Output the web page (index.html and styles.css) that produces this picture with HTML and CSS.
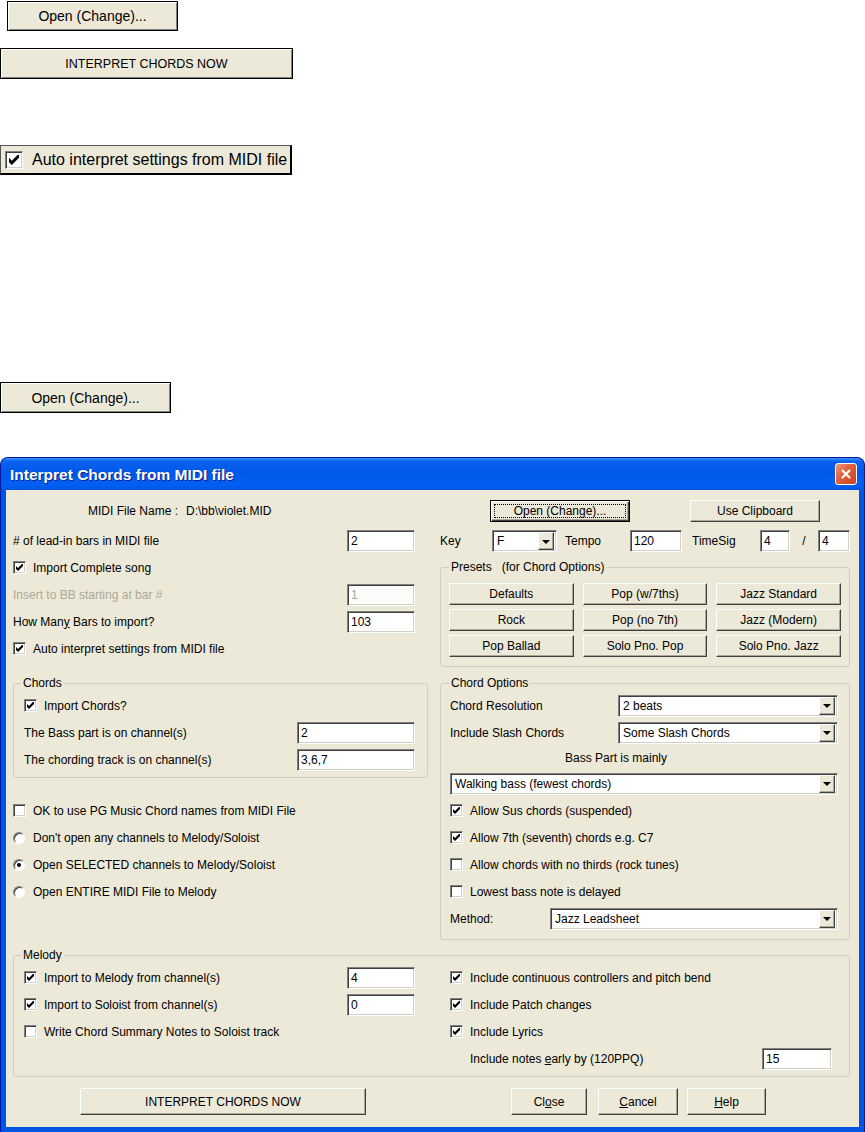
FILE: index.html
```html
<!DOCTYPE html>
<html lang="en">
<head>
    <meta charset="UTF-8">
    <title>Interpret Chords from MIDI file</title>
    <link rel="stylesheet" href="styles.css">
</head>
<body>
    <div class="samples">
        <button class="sample-btn open-first">Open (Change)...</button>
        <button class="sample-btn interpret">INTERPRET CHORDS NOW</button>
        <div class="sample-check">
            <span class="chk big"><svg width="10" height="10" viewBox="0 0 7 7"><path d="M0 2 L2 4 L7 -1 L7 2 L2 7 L0 5 Z"/></svg></span>
            Auto interpret settings from MIDI file
        </div>
        <button class="sample-btn open-second">Open (Change)...</button>
    </div>

    <div class="dialog">
        <div class="titlebar">
            <span class="title">Interpret Chords from MIDI file</span>
            <span class="close-x"><svg width="12" height="12" viewBox="0 0 12 12"><path d="M2 2 L10 10 M10 2 L2 10"/></svg></span>
        </div>

        <div class="client">
            <div class="split head">
                <div class="half-left file-name"><span>MIDI File Name :</span><span class="path">D:\bb\violet.MID</span></div>
                <div class="half-right">
                    <button class="btn default open-btn"><span class="focus">Open (Change)...</span></button>
                    <button class="btn clip-btn">Use Clipboard</button>
                </div>
            </div>

            <div class="split leadin">
                <div class="half-left row">
                    <span class="lbl"># of lead-in bars in MIDI file</span>
                    <div class="edit w68 gap-r">2</div>
                </div>
                <div class="half-right row">
                    <span class="key-lbl">Key</span>
                    <div class="combo w65"><span class="val">F</span><span class="arrow"></span></div>
                    <span class="tempo-lbl">Tempo</span>
                    <div class="edit w52">120</div>
                    <span class="ts-lbl">TimeSig</span>
                    <div class="edit w30">4</div>
                    <span class="slash">/</span>
                    <div class="edit w32">4</div>
                </div>
            </div>

            <div class="split cols">
                <div class="half-left">
                    <div class="line"><span class="chk on"><svg width="7" height="7" viewBox="0 0 7 7"><path d="M0 2 L2 4 L7 -1 L7 2 L2 7 L0 5 Z"/></svg></span>Import Complete song</div>
                    <div class="line disabled"><span class="lbl">Insert to BB starting at bar #</span><div class="edit w68 gap-r off">1</div></div>
                    <div class="line"><span class="lbl">How Man<u>y</u> Bars to import?</span><div class="edit w68 gap-r">103</div></div>
                    <div class="line"><span class="chk on"><svg width="7" height="7" viewBox="0 0 7 7"><path d="M0 2 L2 4 L7 -1 L7 2 L2 7 L0 5 Z"/></svg></span>Auto interpret settings from MIDI file</div>

                    <fieldset class="group chords">
                        <legend>Chords</legend>
                        <div class="line"><span class="chk on"><svg width="7" height="7" viewBox="0 0 7 7"><path d="M0 2 L2 4 L7 -1 L7 2 L2 7 L0 5 Z"/></svg></span>Import Chords?</div>
                        <div class="line"><span class="lbl">The Bass part is on channel(s)</span><div class="edit w118">2</div></div>
                        <div class="line"><span class="lbl">The chording track is on channel(s)</span><div class="edit w118">3,6,7</div></div>
                    </fieldset>

                    <div class="options">
                        <div class="line"><span class="chk"></span>OK to use PG Music Chord names from MIDI File</div>
                        <div class="line"><span class="radio"></span>Don't open any channels to Melody/Soloist</div>
                        <div class="line"><span class="radio on"></span>Open SELECTED channels to Melody/Soloist</div>
                        <div class="line"><span class="radio"></span>Open ENTIRE MIDI File to Melody</div>
                    </div>
                </div>

                <div class="half-right stack">
                    <fieldset class="group presets">
                        <legend>Presets&nbsp;&nbsp; (for Chord Options)</legend>
                        <div class="preset-grid">
                            <button class="btn">Defaults</button>
                            <button class="btn">Pop (w/7ths)</button>
                            <button class="btn">Jazz Standard</button>
                            <button class="btn">Rock</button>
                            <button class="btn">Pop (no 7th)</button>
                            <button class="btn">Jazz (Modern)</button>
                            <button class="btn">Pop Ballad</button>
                            <button class="btn">Solo Pno. Pop</button>
                            <button class="btn">Solo Pno. Jazz</button>
                        </div>
                    </fieldset>

                    <fieldset class="group chord-options">
                        <legend>Chord Options</legend>
                        <div class="line"><span class="lbl">Chord Resolution</span><div class="combo w220"><span class="val">2 beats</span><span class="arrow"></span></div></div>
                        <div class="line"><span class="lbl">Include Slash Chords</span><div class="combo w220"><span class="val">Some Slash Chords</span><span class="arrow"></span></div></div>
                        <div class="bass-caption">Bass Part is mainly</div>
                        <div class="line"><div class="combo wide"><span class="val">Walking bass (fewest chords)</span><span class="arrow"></span></div></div>
                        <div class="line"><span class="chk on"><svg width="7" height="7" viewBox="0 0 7 7"><path d="M0 2 L2 4 L7 -1 L7 2 L2 7 L0 5 Z"/></svg></span>Allow Sus chords (suspended)</div>
                        <div class="line"><span class="chk on"><svg width="7" height="7" viewBox="0 0 7 7"><path d="M0 2 L2 4 L7 -1 L7 2 L2 7 L0 5 Z"/></svg></span>Allow 7th (seventh) chords e.g. C7</div>
                        <div class="line"><span class="chk"></span>Allow chords with no thirds (rock tunes)</div>
                        <div class="line"><span class="chk"></span>Lowest bass note is delayed</div>
                        <div class="line"><span class="method-lbl">Method:</span><div class="combo w288"><span class="val">Jazz Leadsheet</span><span class="arrow"></span></div></div>
                    </fieldset>
                </div>
            </div>

            <fieldset class="group melody">
                <legend>Melody</legend>
                <div class="melody-grid">
                    <div>
                        <div class="line"><span class="chk on"><svg width="7" height="7" viewBox="0 0 7 7"><path d="M0 2 L2 4 L7 -1 L7 2 L2 7 L0 5 Z"/></svg></span><span class="lbl">Import to Melody from channel(s)</span><div class="edit w68">4</div></div>
                        <div class="line"><span class="chk on"><svg width="7" height="7" viewBox="0 0 7 7"><path d="M0 2 L2 4 L7 -1 L7 2 L2 7 L0 5 Z"/></svg></span><span class="lbl">Import to Soloist from channel(s)</span><div class="edit w68">0</div></div>
                        <div class="line"><span class="chk"></span>Write Chord Summary Notes to Soloist track</div>
                    </div>
                    <div>
                        <div class="line"><span class="chk on"><svg width="7" height="7" viewBox="0 0 7 7"><path d="M0 2 L2 4 L7 -1 L7 2 L2 7 L0 5 Z"/></svg></span>Include continuous controllers and pitch bend</div>
                        <div class="line"><span class="chk on"><svg width="7" height="7" viewBox="0 0 7 7"><path d="M0 2 L2 4 L7 -1 L7 2 L2 7 L0 5 Z"/></svg></span>Include Patch changes</div>
                        <div class="line"><span class="chk on"><svg width="7" height="7" viewBox="0 0 7 7"><path d="M0 2 L2 4 L7 -1 L7 2 L2 7 L0 5 Z"/></svg></span>Include Lyrics</div>
                        <div class="line"><span class="lbl early">Include notes <u>e</u>arly by (120PPQ)</span><div class="edit w70">15</div></div>
                    </div>
                </div>
            </fieldset>

            <div class="actions">
                <button class="btn big-btn act-interpret">INTERPRET CHORDS NOW</button>
                <button class="btn big-btn act-close">Cl<u>o</u>se</button>
                <button class="btn big-btn act-cancel"><u>C</u>ancel</button>
                <button class="btn big-btn act-help"><u>H</u>elp</button>
            </div>
        </div>
    </div>
</body>
</html>
```

FILE: styles.css
```css
* {
    box-sizing: border-box;
}
body {
    margin: 0;
    background: #ffffff;
    color: #000000;
    font-family: "Liberation Sans", Arial, sans-serif;
    font-size: 12px;
}
button {
    font-family: inherit;
    font-size: 12px;
    color: #000000;
    padding: 0;
    cursor: default;
}
u {
    text-decoration: underline;
}

/* loose screenshots of the controls above the dialog */
.samples {
    height: 457px;
    overflow: hidden;
}
.sample-btn {
    display: block;
    background: #ece9d8;
    border: 1px solid #000;
    box-shadow: inset 1px 1px #fff, inset -1px -1px #808080;
}
.open-first {
    margin: 1px 0 0 7px;
    width: 171px;
    height: 30px;
    font-size: 14px;
}
.interpret {
    margin-top: 17px;
    width: 293px;
    height: 31px;
    font-size: 12.5px;
}
.sample-check {
    margin-top: 66px;
    width: 292px;
    height: 30px;
    display: flex;
    align-items: center;
    padding-left: 4px;
    background: #ece9d8;
    border: 1px solid #555;
    border-right: 2px solid #000;
    border-bottom: 2px solid #000;
    font-size: 16px;
}
.open-second {
    margin-top: 207px;
    width: 171px;
    height: 31px;
    font-size: 14px;
}

/* dialog frame */
.dialog {
    width: 865px;
    height: 675px;
    display: flex;
    flex-direction: column;
    background: #0055e5;
    border: 1px solid #0019a0;
    border-bottom: none;
    border-radius: 8px 8px 0 0;
}
.titlebar {
    height: 32px;
    flex: none;
    display: flex;
    align-items: center;
    justify-content: space-between;
    padding: 0 7px 0 9px;
    border-radius: 7px 7px 0 0;
    background: linear-gradient(to bottom, #3d95ff 0%, #0a62f0 10%, #0058e8 45%, #0060f4 85%, #0052e0 100%);
}
.title {
    color: #fff;
    font-size: 15.5px;
    font-weight: bold;
    padding-top: 2px;
    text-shadow: 1px 1px #0a1e8a;
}
.close-x {
    width: 22px;
    height: 22px;
    display: flex;
    align-items: center;
    justify-content: center;
    border: 1px solid #fff;
    border-radius: 3px;
    background: linear-gradient(135deg, #f09a80 0%, #e2633f 40%, #c9401f 100%);
}
.close-x path {
    stroke: #fff;
    stroke-width: 2.3;
    fill: none;
}
.client {
    flex: 1;
    margin: 0 5px 5px 5px;
    padding: 10px 9px 12px 7px;
    background: #ece9d8;
}

/* common controls */
.chk {
    width: 13px;
    height: 13px;
    flex: none;
    display: inline-flex;
    align-items: center;
    justify-content: center;
    margin-right: 7px;
    background: #fff;
    border: 1px solid;
    border-color: #808080 #fff #fff #808080;
    box-shadow: inset 1px 1px #404040, inset -1px -1px #d4d0c8;
}
.chk svg path {
    fill: #000;
}
.chk.big {
    width: 18px;
    height: 18px;
    margin-right: 9px;
}
.radio {
    position: relative;
    width: 12px;
    height: 12px;
    flex: none;
    margin-right: 8px;
    border-radius: 50%;
    background: #fff;
    border: 1px solid;
    border-color: #808080 #fff #fff #808080;
    box-shadow: inset 1px 1px #404040;
}
.radio.on::after {
    content: "";
    position: absolute;
    left: 3px;
    top: 3px;
    width: 4px;
    height: 4px;
    border-radius: 50%;
    background: #000;
}
.edit {
    height: 22px;
    flex: none;
    display: flex;
    align-items: center;
    padding: 0 3px;
    background: #fff;
    border: 1px solid;
    border-color: #808080 #fff #fff #808080;
    box-shadow: inset 1px 1px #404040, inset -1px -1px #d4d0c8;
}
.edit.off {
    color: #aca899;
    background: #fbfbf9;
}
.combo {
    height: 22px;
    flex: none;
    display: flex;
    align-items: center;
    padding: 2px 2px 2px 4px;
    background: #fff;
    border: 1px solid;
    border-color: #808080 #fff #fff #808080;
    box-shadow: inset 1px 1px #404040, inset -1px -1px #d4d0c8;
}
.combo .val {
    flex: 1;
}
.combo .arrow {
    width: 16px;
    height: 18px;
    display: flex;
    align-items: center;
    justify-content: center;
    background: #ece9d8;
    border: 1px solid;
    border-color: #fff #404040 #404040 #fff;
    box-shadow: inset -1px -1px #aca899;
}
.combo .arrow::after {
    content: "";
    border-left: 4px solid transparent;
    border-right: 4px solid transparent;
    border-top: 4px solid #000;
    margin-top: 1px;
}
.btn {
    height: 22px;
    background: #ece9d8;
    border: 1px solid;
    border-color: #fff #404040 #404040 #fff;
    box-shadow: inset -1px -1px #aca899;
}
.btn.default {
    padding: 3px;
    border-color: #000;
    box-shadow: inset 1px 1px #fff, inset -1px -1px #404040, inset -2px -2px #aca899;
}
.btn .focus {
    height: 100%;
    display: flex;
    align-items: center;
    justify-content: center;
    border: 1px dotted #000;
}

.w30 { width: 30px; }
.w32 { width: 32px; }
.w52 { width: 52px; }
.w65 { width: 65px; }
.w68 { width: 68px; }
.w70 { width: 70px; }
.w118 { width: 118px; }
.w220 { width: 220px; }
.w288 { width: 288px; }
.gap-r { margin-right: 13px; }

/* layout */
.split {
    display: flex;
    gap: 12px;
}
.half-left {
    width: 415px;
    flex: none;
}
.half-right {
    width: 410px;
    flex: none;
}
.row {
    display: flex;
    align-items: center;
}
.line {
    height: 27px;
    display: flex;
    align-items: center;
}
.lbl {
    flex: 1;
}
.disabled {
    color: #aca899;
}

.head {
    height: 22px;
}
.file-name {
    padding-left: 75px;
    line-height: 22px;
}
.file-name .path {
    margin-left: 8px;
}
.head .half-right {
    display: flex;
}
.open-btn {
    margin-left: 50px;
    width: 140px;
}
.clip-btn {
    margin-left: 60px;
    width: 130px;
}

.leadin {
    margin-top: 8px;
    height: 22px;
}
.key-lbl {
    width: 52px;
}
.tempo-lbl {
    width: 65px;
    margin-left: 8px;
}
.ts-lbl {
    width: 68px;
    margin-left: 10px;
}
.slash {
    width: 28px;
    text-align: center;
}

.cols {
    margin-top: 2px;
    align-items: flex-start;
}

/* group boxes */
.group {
    margin: 0;
    min-width: 0;
    border: 1px solid #d0d0bf;
    border-radius: 3px;
}
.group legend {
    padding: 0 2px;
    line-height: 14px;
}
.chords {
    margin-top: 14px;
    padding: 2px 12px 4px 10px;
}
.chords legend,
.melody legend {
    margin-left: -3px;
}
.options {
    margin-top: 19px;
}

.presets {
    margin-top: 6px;
    padding: 9px 8px 9px 8px;
}
.preset-grid {
    display: grid;
    grid-template-columns: repeat(3, 1fr);
    gap: 4px 9px;
}
.chord-options {
    margin-top: 9px;
    padding: 2px 11px 7px 9px;
}
.chord-options legend {
    margin-left: -1px;
}
.bass-caption {
    height: 24px;
    line-height: 24px;
    padding-left: 115px;
}
.combo.wide {
    flex: 1;
}
.method-lbl {
    width: 100px;
}

.melody {
    margin-top: 8px;
    padding: 2px 17px 4px 10px;
}
.melody-grid {
    display: grid;
    grid-template-columns: 391px 1fr;
    column-gap: 35px;
}
.early {
    padding-left: 20px;
}

.actions {
    margin-top: 11px;
    display: flex;
}
.big-btn {
    height: 27px;
}
.act-interpret {
    margin-left: 67px;
    width: 286px;
}
.act-close {
    margin-left: 145px;
    width: 76px;
}
.act-cancel {
    margin-left: 11px;
    width: 80px;
}
.act-help {
    margin-left: 9px;
    width: 79px;
}
```
